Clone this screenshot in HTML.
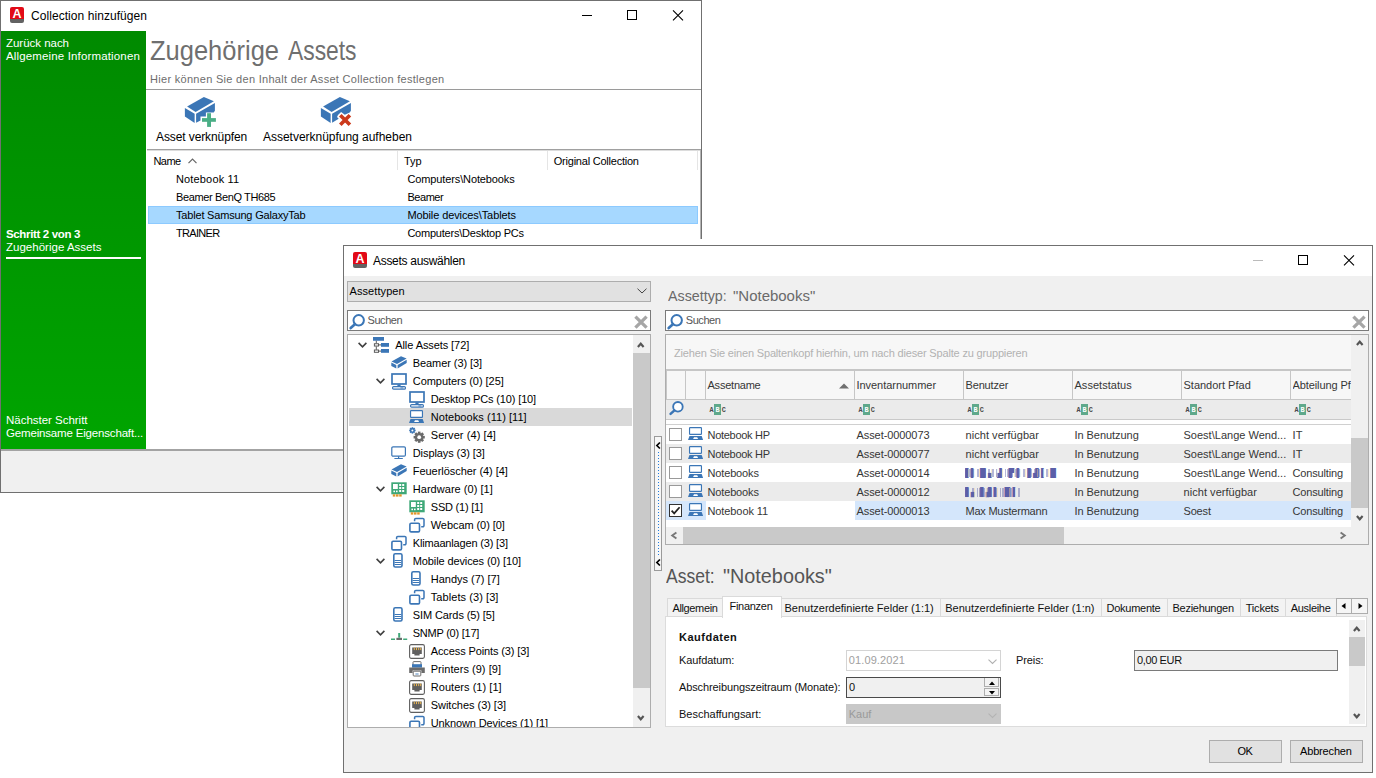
<!DOCTYPE html>
<html lang="de"><head><meta charset="utf-8"><title>Collection hinzufügen</title><style>
html,body{margin:0;padding:0;background:#fff;}
body{width:1376px;height:778px;position:relative;overflow:hidden;font-family:"Liberation Sans",sans-serif;}
.a{position:absolute;white-space:pre;}
svg.a{overflow:visible;}
.t11{font-size:11px;letter-spacing:-0.08px;}
.t12{font-size:12px;}
.t11s{font-size:11.5px;}
.b{font-weight:bold;}
.hd{font-weight:normal;}
.mosaic{font-family:"DejaVu Sans","Liberation Sans",sans-serif;font-size:9px;color:#5a5fa8;overflow:hidden;letter-spacing:-1.2px;}
.mos{background-size:23px 100%;background-image:linear-gradient(90deg,#5a5fa8 0 2px,transparent 2px 3px,#f3cf8f 3px 4px,#5a5fa8 4px 6px,transparent 6px 8px,#5a5fa8 8px 9px,#cfeaf5 9px 10px,transparent 10px 12px,#5a5fa8 12px 14px,#f3cf8f 14px 15px,transparent 15px 17px,#5a5fa8 17px 18px,transparent 18px 19px,#5a5fa8 19px 21px,transparent 21px 23px);opacity:.45;}
</style></head>
<body>
<div class="a" style="left:0px;top:0px;width:702px;height:493px;background:#fff;border:1px solid #707070;box-sizing:border-box;"></div>
<svg class="a" style="left:10px;top:7px;" width="14" height="16" viewBox="0 0 14 16"><path d="M2 0h10a2 2 0 0 1 2 2v10H0V2a2 2 0 0 1 2-2z" fill="#e20a17"/><path d="M0 12h14v2a2 2 0 0 1-2 2H2a2 2 0 0 1-2-2z" fill="#626262"/><text x="7" y="11.2" text-anchor="middle" font-family="Liberation Sans, sans-serif" font-weight="bold" font-size="12.5" fill="#fff">A</text></svg>
<span class="a t12" style="left:31px;top:7.5px;line-height:16px;letter-spacing:0.06px;color:#000;">Collection hinzufügen</span>
<svg class="a" style="left:582px;top:10px;" width="102" height="11" viewBox="0 0 102 11"><path d="M0 5.5H10" stroke="#000" stroke-width="1"/><rect x="45.5" y="0.5" width="9" height="9" fill="none" stroke="#000" stroke-width="1"/><path d="M91 0.3 L101 10.3 M101 0.3 L91 10.3" stroke="#000" stroke-width="1.1"/></svg>
<div class="a" style="left:1px;top:31px;width:145px;height:419px;background:linear-gradient(#008a00,#00a500);"></div>
<span class="a t11s" style="left:6px;top:36px;line-height:14px;letter-spacing:-0.026px;color:#fff;">Zurück nach</span>
<span class="a t11s" style="left:6px;top:49px;line-height:14px;letter-spacing:0.149px;color:#fff;">Allgemeine Informationen</span>
<span class="a t11s b" style="left:6px;top:227px;line-height:14px;letter-spacing:-0.350px;color:#fff;">Schritt 2 von 3</span>
<span class="a t11s" style="left:6px;top:240px;line-height:14px;letter-spacing:0.014px;color:#fff;">Zugehörige Assets</span>
<div class="a" style="left:6px;top:257px;width:135px;height:2px;background:#fff;"></div>
<span class="a t11s" style="left:6px;top:413px;line-height:14px;letter-spacing:-0.020px;color:#fff;">Nächster Schritt</span>
<span class="a t11s" style="left:6px;top:426px;line-height:14px;letter-spacing:-0.171px;color:#fff;">Gemeinsame Eigenschaft...</span>
<span class="a hd" style="left:150.2px;top:33.44px;font-size:27.6px;line-height:36px;transform:scaleX(0.9240);transform-origin:0 0;color:#6f6f6f">Zugehörige</span>
<span class="a hd" style="left:288.2px;top:33.44px;font-size:27.6px;line-height:36px;transform:scaleX(0.8272);transform-origin:0 0;color:#6f6f6f">Assets</span>
<span class="a t11s" style="left:150px;top:72px;line-height:14px;letter-spacing:0.296px;color:#6d6d6d;font-size:11px;">Hier können Sie den Inhalt der Asset Collection festlegen</span>
<div class="a" style="left:146px;top:89px;width:555px;height:1px;background:#9a9a9a;"></div>
<svg class="a" style="left:185px;top:97px;" width="32" height="31" viewBox="0 0 32 31"><path d="M18.9 -0.1 L28.9 4.3 L10.6 15 L2.1 9.4z" fill="#3b76b6"/><path d="M-0.1 10.9 L9.65 16.7 L9.65 26 L-0.1 19.4z" fill="#3b76b6"/><path d="M11.1 16.7 L29.9 6 L29.9 13.8 L28.7 15.5 L20.9 15.5 L20.9 19.4 L15.5 19.4 L15.5 23.5 L11.1 25.8z" fill="#3b76b6"/><rect x="22.1" y="16.2" width="3.9" height="13.7" fill="#4aae86"/><rect x="17" y="21.1" width="13.9" height="3.7" fill="#4aae86"/></svg>
<svg class="a" style="left:321px;top:97px;" width="32" height="31" viewBox="0 0 32 31"><path d="M18.9 -0.1 L28.9 4.3 L10.6 15 L2.1 9.4z" fill="#3b76b6"/><path d="M-0.1 10.9 L9.65 16.7 L9.65 26 L-0.1 19.4z" fill="#3b76b6"/><path d="M11.1 16.7 L29.9 6 L29.9 13.8 L28.7 15.5 L23.8 17.7 L20.1 15 L17 17.9 L16 19.9 L17.7 21.8 L11.1 25.8z" fill="#3b76b6"/><path d="M19.3 18.3 L28.9 27.7 M28.9 18.3 L19.3 27.7" stroke="#cc3a1c" stroke-width="3.7" fill="none"/></svg>
<span class="a t12" style="left:156px;top:129px;line-height:16px;letter-spacing:-0.1px;color:#000;">Asset verknüpfen</span>
<span class="a t12" style="left:263px;top:129px;line-height:16px;letter-spacing:-0.02px;color:#000;">Assetverknüpfung aufheben</span>
<div class="a" style="left:147px;top:149px;width:554px;height:1px;background:#a0a0a0;"></div>
<div class="a" style="left:147px;top:150px;width:554px;height:1px;background:#dcdcdc;"></div>
<div class="a" style="left:700px;top:150px;width:1px;height:300px;background:#b4b4b4;"></div>
<div class="a" style="left:397px;top:151px;width:1px;height:19px;background:#e5e5e5;"></div>
<div class="a" style="left:547px;top:151px;width:1px;height:19px;background:#e5e5e5;"></div>
<div class="a" style="left:697px;top:151px;width:1px;height:19px;background:#e5e5e5;"></div>
<span class="a t11" style="left:153.5px;top:153.5px;line-height:14px;letter-spacing:-0.586px;color:#000;">Name</span>
<svg class="a" style="left:188.3px;top:157.6px;" width="9" height="6" viewBox="0 0 9 6"><path d="M0.5 5.2 L4.5 1 L8.5 5.2" fill="none" stroke="#666" stroke-width="1.15"/></svg>
<span class="a t11" style="left:404px;top:153.5px;line-height:14px;letter-spacing:-0.078px;color:#000;">Typ</span>
<span class="a t11" style="left:553.75px;top:153.5px;line-height:14px;letter-spacing:-0.225px;color:#000;">Original Collection</span>
<span class="a t11" style="left:176px;top:171.5px;line-height:14px;letter-spacing:0.152px;color:#000;">Notebook 11</span>
<span class="a t11" style="left:407.4px;top:171.5px;line-height:14px;letter-spacing:-0.116px;color:#000;">Computers\Notebooks</span>
<span class="a t11" style="left:176px;top:189.5px;line-height:14px;letter-spacing:-0.372px;color:#000;">Beamer BenQ TH685</span>
<span class="a t11" style="left:407.4px;top:189.5px;line-height:14px;letter-spacing:-0.439px;color:#000;">Beamer</span>
<div class="a" style="left:148px;top:206px;width:550px;height:18px;background:#a6d8ff;border:1px solid #8ccaff;box-sizing:border-box;"></div>
<span class="a t11" style="left:176px;top:207.5px;line-height:14px;letter-spacing:-0.184px;color:#000;">Tablet Samsung GalaxyTab</span>
<span class="a t11" style="left:407.4px;top:207.5px;line-height:14px;letter-spacing:-0.099px;color:#000;">Mobile devices\Tablets</span>
<span class="a t11" style="left:176px;top:225.5px;line-height:14px;letter-spacing:-0.683px;color:#000;">TRAINER</span>
<span class="a t11" style="left:407.4px;top:225.5px;line-height:14px;letter-spacing:-0.217px;color:#000;">Computers\Desktop PCs</span>
<div class="a" style="left:1px;top:451px;width:700px;height:41px;background:#f0f0f0;"></div>
<div class="a" style="left:1px;top:449px;width:700px;height:2px;background:#a3a3a3;"></div>
<div class="a" style="left:343px;top:239px;width:1033px;height:6px;background:#fff;"></div>
<div class="a" style="left:343px;top:245px;width:1030px;height:528px;background:#f0f0f0;border:1px solid #707070;box-sizing:border-box;"></div>
<div class="a" style="left:344px;top:246px;width:1028px;height:30px;background:#fff;"></div>
<svg class="a" style="left:353px;top:252px;" width="14" height="16" viewBox="0 0 14 16"><path d="M2 0h10a2 2 0 0 1 2 2v10H0V2a2 2 0 0 1 2-2z" fill="#e20a17"/><path d="M0 12h14v2a2 2 0 0 1-2 2H2a2 2 0 0 1-2-2z" fill="#626262"/><text x="7" y="11.2" text-anchor="middle" font-family="Liberation Sans, sans-serif" font-weight="bold" font-size="12.5" fill="#fff">A</text></svg>
<span class="a t12" style="left:373px;top:252.5px;line-height:16px;letter-spacing:-0.296px;color:#000;">Assets auswählen</span>
<svg class="a" style="left:1253px;top:255px;" width="104" height="11" viewBox="0 0 104 11"><path d="M0 5.5H10" stroke="#bbb" stroke-width="1"/><rect x="45.5" y="0.5" width="9" height="9" fill="none" stroke="#000" stroke-width="1"/><path d="M91 0.3 L101 10.3 M101 0.3 L91 10.3" stroke="#000" stroke-width="1.1"/></svg>
<div class="a" style="left:347px;top:281px;width:304px;height:21px;background:#e1e1e1;border:1px solid #adadad;box-sizing:border-box;"></div>
<span class="a t11" style="left:349.5px;top:283.5px;line-height:14px;letter-spacing:0.083px;color:#000;">Assettypen</span>
<svg class="a" style="left:637px;top:288px;" width="10" height="6" viewBox="0 0 10 6"><path d="M0.5 0.7 L5 5 L9.5 0.7" fill="none" stroke="#444" stroke-width="1"/></svg>
<div class="a" style="left:347px;top:310px;width:304px;height:21px;background:#fff;border:1px solid #7a7a7a;box-sizing:border-box;"></div>
<svg class="a" style="left:349px;top:314px;" width="16.0" height="16.0" viewBox="0 0 16 16"><circle cx="9.7" cy="6.3" r="5.2" fill="#fff" stroke="#3b76b6" stroke-width="2"/><path d="M5.9 10.2 L1.7 14.0" stroke="#3b76b6" stroke-width="2.7" stroke-linecap="round"/></svg>
<span class="a t11" style="left:367.5px;top:313px;line-height:14px;letter-spacing:-0.427px;color:#555;">Suchen</span>
<svg class="a" style="left:634.3px;top:315px;" width="14" height="14" viewBox="0 0 14 14"><path d="M1.4 1.6 L12.6 12.6 M12.6 1.6 L1.4 12.6" stroke="#a6a6a6" stroke-width="3.3" fill="none"/></svg>
<div class="a" style="left:347px;top:334px;width:304px;height:394px;background:#fff;border:1px solid #adadad;box-sizing:border-box;"></div>
<div class="a" style="left:348px;top:335px;width:302px;height:392px;overflow:hidden">
<svg class="a" style="left:10px;top:7px;" width="9" height="6" viewBox="0 0 9 6"><path d="M0.6 0.9 L4.5 4.8 L8.4 0.9" fill="none" stroke="#404040" stroke-width="1.6"/></svg>
<svg class="a" style="left:25px;top:2px;" width="16" height="16" viewBox="0 0 16 16"><rect x="0" y="0" width="11" height="3.75" fill="#3b76b6"/><rect x="8" y="6" width="8" height="3.8" fill="#3b76b6"/><rect x="8" y="12" width="8" height="3.8" fill="#3b76b6"/><path d="M3.3 3.7V6.4M3.3 9.4V12.8M6 7.9H8M6 14.1H8" stroke="#5a5a5a" stroke-width="1" fill="none"/><rect x="1.4" y="6.75" width="4.1" height="2.3" fill="#fff" stroke="#5a5a5a" stroke-width="1"/><rect x="1.4" y="13" width="4.1" height="2.3" fill="#fff" stroke="#5a5a5a" stroke-width="1"/></svg>
<span class="a t11" style="left:47.25px;top:2.5px;line-height:14px;letter-spacing:-0.082px;color:#000;">Alle Assets [72]</span>
<svg class="a" style="left:43px;top:21px;" width="16" height="13" viewBox="0 0 16 13"><path d="M0.5 5.6 L10 0.3 L15.6 2.5 L6 8z" fill="#3b76b6"/><path d="M0.3 6.6 L5.3 8.9 L5.3 12.5 L0.3 10.1z" fill="#3b76b6"/><path d="M6.6 9 L15.7 3.8 L15.7 7.1 L6.6 12.5z" fill="#3b76b6"/></svg>
<span class="a t11" style="left:64.75px;top:20.5px;line-height:14px;letter-spacing:-0.076px;color:#000;">Beamer (3) [3]</span>
<svg class="a" style="left:28px;top:43px;" width="9" height="6" viewBox="0 0 9 6"><path d="M0.6 0.9 L4.5 4.8 L8.4 0.9" fill="none" stroke="#404040" stroke-width="1.6"/></svg>
<svg class="a" style="left:43px;top:38px;" width="16" height="17" viewBox="0 0 16 17"><rect x="1" y="1" width="14" height="10" fill="#fff" stroke="#3b76b6" stroke-width="1.7"/><rect x="6.4" y="11.4" width="3.2" height="1.8" fill="#3b76b6"/><rect x="1.6" y="13.6" width="12.8" height="2.6" rx="1" fill="#fff" stroke="#3b76b6" stroke-width="1.2"/><rect x="9.4" y="14.5" width="3" height="0.9" fill="#3b76b6"/></svg>
<span class="a t11" style="left:64.75px;top:38.5px;line-height:14px;letter-spacing:-0.039px;color:#000;">Computers (0) [25]</span>
<svg class="a" style="left:61px;top:56px;" width="16" height="17" viewBox="0 0 16 17"><rect x="1" y="1" width="14" height="10" fill="#fff" stroke="#3b76b6" stroke-width="1.7"/><rect x="6.4" y="11.4" width="3.2" height="1.8" fill="#3b76b6"/><rect x="1.6" y="13.6" width="12.8" height="2.6" rx="1" fill="#fff" stroke="#3b76b6" stroke-width="1.2"/><rect x="9.4" y="14.5" width="3" height="0.9" fill="#3b76b6"/></svg>
<span class="a t11" style="left:82.75px;top:56.5px;line-height:14px;letter-spacing:-0.141px;color:#000;">Desktop PCs (10) [10]</span>
<div class="a" style="left:1px;top:73px;width:283px;height:18px;background:#d9d9d9;"></div>
<svg class="a" style="left:61px;top:75px;" width="16" height="14" viewBox="0 0 16 14"><rect x="1.55" y="0.65" width="11.9" height="6.7" rx="0.6" fill="#fff" stroke="#3b76b6" stroke-width="1.15"/><path d="M1.5 9 H13.7 L15.1 13 H0z" fill="#3b76b6"/><path d="M5.1 11.9 L6 10.3 H9.2 L10.1 11.9z" fill="#fff"/></svg>
<span class="a t11" style="left:82.75px;top:74.5px;line-height:14px;letter-spacing:0.053px;color:#000;">Notebooks (11) [11]</span>
<svg class="a" style="left:61px;top:92px;" width="16" height="16" viewBox="0 0 16 16"><g transform="translate(10.2,10.2)" fill="#6b6b6b"><rect x="-1.3" y="-5.6" width="2.6" height="11.2" transform="rotate(0)"/><rect x="-1.3" y="-5.6" width="2.6" height="11.2" transform="rotate(45)"/><rect x="-1.3" y="-5.6" width="2.6" height="11.2" transform="rotate(90)"/><rect x="-1.3" y="-5.6" width="2.6" height="11.2" transform="rotate(135)"/><circle r="4.3"/><circle r="1.9" fill="#fff"/></g><g transform="translate(3.4,3.4)" fill="#3b76b6"><rect x="-0.8" y="-3.2" width="1.6" height="6.4" transform="rotate(0)"/><rect x="-0.8" y="-3.2" width="1.6" height="6.4" transform="rotate(45)"/><rect x="-0.8" y="-3.2" width="1.6" height="6.4" transform="rotate(90)"/><rect x="-0.8" y="-3.2" width="1.6" height="6.4" transform="rotate(135)"/><circle r="2.3"/><circle r="1" fill="#fff"/></g></svg>
<span class="a t11" style="left:82.75px;top:92.5px;line-height:14px;letter-spacing:0.076px;color:#000;">Server (4) [4]</span>
<svg class="a" style="left:43px;top:111px;" width="16" height="14" viewBox="0 0 16 14"><rect x="0.8" y="0.8" width="13.6" height="9.4" rx="1.2" fill="#fff" stroke="#3b76b6" stroke-width="1.2"/><path d="M7.6 10.2V12.2M3.4 12.5H11.8" stroke="#3b76b6" stroke-width="1.2" fill="none"/></svg>
<span class="a t11" style="left:64.75px;top:110.5px;line-height:14px;letter-spacing:-0.085px;color:#000;">Displays (3) [3]</span>
<svg class="a" style="left:43px;top:129px;" width="16" height="13" viewBox="0 0 16 13"><path d="M0.5 5.6 L10 0.3 L15.6 2.5 L6 8z" fill="#3b76b6"/><path d="M0.3 6.6 L5.3 8.9 L5.3 12.5 L0.3 10.1z" fill="#3b76b6"/><path d="M6.6 9 L15.7 3.8 L15.7 7.1 L6.6 12.5z" fill="#3b76b6"/></svg>
<span class="a t11" style="left:64.75px;top:128.5px;line-height:14px;letter-spacing:-0.044px;color:#000;">Feuerlöscher (4) [4]</span>
<svg class="a" style="left:28px;top:151px;" width="9" height="6" viewBox="0 0 9 6"><path d="M0.6 0.9 L4.5 4.8 L8.4 0.9" fill="none" stroke="#404040" stroke-width="1.6"/></svg>
<svg class="a" style="left:43px;top:147px;" width="16" height="15" viewBox="0 0 16 15"><rect x="0.3" y="0.3" width="15.4" height="12" fill="#3fa878"/><rect x="2" y="2" width="4.8" height="5" fill="#fff"/><rect x="2.4" y="8.6" width="1.6" height="1.6" fill="#fff"/><rect x="5" y="8.6" width="1.6" height="1.6" fill="#fff"/><rect x="8.2" y="2" width="2" height="2" fill="#fff"/><rect x="8.2" y="5" width="2" height="2" fill="#fff"/><rect x="8.2" y="8" width="2" height="2" fill="#fff"/><rect x="11.2" y="2" width="2" height="2" fill="#fff"/><rect x="11.2" y="5" width="2" height="2" fill="#fff"/><rect x="11.2" y="8" width="2" height="2" fill="#fff"/><rect x="1.8" y="12.3" width="2.5" height="2.3" fill="#e2952a"/><rect x="5" y="12.3" width="2.5" height="2.3" fill="#e2952a"/><rect x="8.2" y="12.3" width="2.5" height="2.3" fill="#e2952a"/></svg>
<span class="a t11" style="left:64.75px;top:146.5px;line-height:14px;letter-spacing:0.038px;color:#000;">Hardware (0) [1]</span>
<svg class="a" style="left:61px;top:165px;" width="16" height="15" viewBox="0 0 16 15"><rect x="0.3" y="0.3" width="15.4" height="12" fill="#3fa878"/><rect x="2" y="2" width="4.8" height="5" fill="#fff"/><rect x="2.4" y="8.6" width="1.6" height="1.6" fill="#fff"/><rect x="5" y="8.6" width="1.6" height="1.6" fill="#fff"/><rect x="8.2" y="2" width="2" height="2" fill="#fff"/><rect x="8.2" y="5" width="2" height="2" fill="#fff"/><rect x="8.2" y="8" width="2" height="2" fill="#fff"/><rect x="11.2" y="2" width="2" height="2" fill="#fff"/><rect x="11.2" y="5" width="2" height="2" fill="#fff"/><rect x="11.2" y="8" width="2" height="2" fill="#fff"/><rect x="1.8" y="12.3" width="2.5" height="2.3" fill="#e2952a"/><rect x="5" y="12.3" width="2.5" height="2.3" fill="#e2952a"/><rect x="8.2" y="12.3" width="2.5" height="2.3" fill="#e2952a"/></svg>
<span class="a t11" style="left:82.75px;top:164.5px;line-height:14px;letter-spacing:-0.210px;color:#000;">SSD (1) [1]</span>
<svg class="a" style="left:61px;top:182px;" width="16" height="16" viewBox="0 0 16 16"><path d="M5.6 4.2V2.6a1.2 1.2 0 0 1 1.2-1.2h7a1.2 1.2 0 0 1 1.2 1.2v6a1.2 1.2 0 0 1-1.2 1.2h-1.6" fill="none" stroke="#3b76b6" stroke-width="1.5"/><rect x="0.9" y="6.3" width="9.6" height="8.6" rx="1.2" fill="#fff" stroke="#3b76b6" stroke-width="1.6"/></svg>
<span class="a t11" style="left:82.75px;top:182.5px;line-height:14px;letter-spacing:-0.071px;color:#000;">Webcam (0) [0]</span>
<svg class="a" style="left:43px;top:200px;" width="16" height="16" viewBox="0 0 16 16"><path d="M5.6 4.2V2.6a1.2 1.2 0 0 1 1.2-1.2h7a1.2 1.2 0 0 1 1.2 1.2v6a1.2 1.2 0 0 1-1.2 1.2h-1.6" fill="none" stroke="#3b76b6" stroke-width="1.5"/><rect x="0.9" y="6.3" width="9.6" height="8.6" rx="1.2" fill="#fff" stroke="#3b76b6" stroke-width="1.6"/></svg>
<span class="a t11" style="left:64.75px;top:200.5px;line-height:14px;letter-spacing:-0.168px;color:#000;">Klimaanlagen (3) [3]</span>
<svg class="a" style="left:28px;top:223px;" width="9" height="6" viewBox="0 0 9 6"><path d="M0.6 0.9 L4.5 4.8 L8.4 0.9" fill="none" stroke="#404040" stroke-width="1.6"/></svg>
<svg class="a" style="left:45px;top:218px;" width="10" height="15" viewBox="0 0 10 15"><rect x="0.8" y="0.8" width="8.2" height="13.2" rx="1.5" fill="#fff" stroke="#3b76b6" stroke-width="1.6"/><path d="M1.6 7.5H8.2M1.6 9.5H8.2M1.6 11.5H8.2" stroke="#3b76b6" stroke-width="1"/></svg>
<span class="a t11" style="left:64.75px;top:218.5px;line-height:14px;letter-spacing:-0.112px;color:#000;">Mobile devices (0) [10]</span>
<svg class="a" style="left:63px;top:236px;" width="10" height="15" viewBox="0 0 10 15"><rect x="0.8" y="0.8" width="8.2" height="13.2" rx="1.5" fill="#fff" stroke="#3b76b6" stroke-width="1.6"/><path d="M1.6 7.5H8.2M1.6 9.5H8.2M1.6 11.5H8.2" stroke="#3b76b6" stroke-width="1"/></svg>
<span class="a t11" style="left:82.75px;top:236.5px;line-height:14px;letter-spacing:-0.007px;color:#000;">Handys (7) [7]</span>
<svg class="a" style="left:61px;top:254px;" width="16" height="16" viewBox="0 0 16 16"><path d="M5.6 4.2V2.6a1.2 1.2 0 0 1 1.2-1.2h7a1.2 1.2 0 0 1 1.2 1.2v6a1.2 1.2 0 0 1-1.2 1.2h-1.6" fill="none" stroke="#3b76b6" stroke-width="1.5"/><rect x="0.9" y="6.3" width="9.6" height="8.6" rx="1.2" fill="#fff" stroke="#3b76b6" stroke-width="1.6"/></svg>
<span class="a t11" style="left:82.75px;top:254.5px;line-height:14px;letter-spacing:0.074px;color:#000;">Tablets (3) [3]</span>
<svg class="a" style="left:45px;top:272px;" width="10" height="15" viewBox="0 0 10 15"><rect x="0.8" y="0.8" width="8.2" height="13.2" rx="1.5" fill="#fff" stroke="#3b76b6" stroke-width="1.6"/><path d="M1.6 7.5H8.2M1.6 9.5H8.2M1.6 11.5H8.2" stroke="#3b76b6" stroke-width="1"/></svg>
<span class="a t11" style="left:64.75px;top:272.5px;line-height:14px;letter-spacing:-0.103px;color:#000;">SIM Cards (5) [5]</span>
<svg class="a" style="left:28px;top:295px;" width="9" height="6" viewBox="0 0 9 6"><path d="M0.6 0.9 L4.5 4.8 L8.4 0.9" fill="none" stroke="#404040" stroke-width="1.6"/></svg>
<svg class="a" style="left:43px;top:297px;" width="17" height="9" viewBox="0 0 17 9"><rect x="7.2" y="1" width="2" height="4.7" fill="#3fa878"/><rect x="5.4" y="5.8" width="5.6" height="2.2" fill="#6b6b6b"/><rect x="0" y="6.5" width="4" height="1.5" fill="#3fa878"/><rect x="12.2" y="6.5" width="4" height="1.5" fill="#3fa878"/></svg>
<span class="a t11" style="left:64.75px;top:290.5px;line-height:14px;letter-spacing:-0.238px;color:#000;">SNMP (0) [17]</span>
<svg class="a" style="left:61px;top:309px;" width="16" height="15" viewBox="0 0 16 15"><rect x="0.6" y="0.6" width="14.8" height="13.8" rx="1.6" fill="#fff" stroke="#5f5f5f" stroke-width="1.1"/><path d="M3.2 3.6H12.8V10H10.6V11.4H5.4V10H3.2z" fill="#5f5f5f"/><path d="M5.3 3.6v2.5M7.5 3.6v2.5M9.7 3.6v2.5M11.7 3.6v2.5" stroke="#f0b850" stroke-width="0.95"/></svg>
<span class="a t11" style="left:82.75px;top:308.5px;line-height:14px;letter-spacing:-0.113px;color:#000;">Access Points (3) [3]</span>
<svg class="a" style="left:61px;top:326px;" width="16" height="16" viewBox="0 0 16 16"><rect x="4" y="0.6" width="8" height="4" rx=".8" fill="#fff" stroke="#6b6b6b" stroke-width="1"/><rect x="3" y="3.2" width="10" height="3.4" fill="#3b76b6"/><path d="M0.2 6.6H15.8V12H12.4V9.6H3.6V12H0.2z" fill="#6b6b6b"/><rect x="4.2" y="10.2" width="7.6" height="4.8" rx=".8" fill="#fff" stroke="#6b6b6b" stroke-width="1"/><path d="M6.4 13H9.6" stroke="#3b76b6" stroke-width="0.9"/></svg>
<span class="a t11" style="left:82.75px;top:326.5px;line-height:14px;letter-spacing:0.035px;color:#000;">Printers (9) [9]</span>
<svg class="a" style="left:61px;top:345px;" width="16" height="15" viewBox="0 0 16 15"><rect x="0.6" y="0.6" width="14.8" height="13.8" rx="1.6" fill="#fff" stroke="#5f5f5f" stroke-width="1.1"/><path d="M3.2 3.6H12.8V10H10.6V11.4H5.4V10H3.2z" fill="#5f5f5f"/><path d="M5.3 3.6v2.5M7.5 3.6v2.5M9.7 3.6v2.5M11.7 3.6v2.5" stroke="#f0b850" stroke-width="0.95"/></svg>
<span class="a t11" style="left:82.75px;top:344.5px;line-height:14px;letter-spacing:0.039px;color:#000;">Routers (1) [1]</span>
<svg class="a" style="left:61px;top:363px;" width="16" height="15" viewBox="0 0 16 15"><rect x="0.6" y="0.6" width="14.8" height="13.8" rx="1.6" fill="#fff" stroke="#5f5f5f" stroke-width="1.1"/><path d="M3.2 3.6H12.8V10H10.6V11.4H5.4V10H3.2z" fill="#5f5f5f"/><path d="M5.3 3.6v2.5M7.5 3.6v2.5M9.7 3.6v2.5M11.7 3.6v2.5" stroke="#f0b850" stroke-width="0.95"/></svg>
<span class="a t11" style="left:82.75px;top:362.5px;line-height:14px;letter-spacing:-0.035px;color:#000;">Switches (3) [3]</span>
<svg class="a" style="left:61px;top:380px;" width="16" height="16" viewBox="0 0 16 16"><path d="M5.6 4.2V2.6a1.2 1.2 0 0 1 1.2-1.2h7a1.2 1.2 0 0 1 1.2 1.2v6a1.2 1.2 0 0 1-1.2 1.2h-1.6" fill="none" stroke="#3b76b6" stroke-width="1.5"/><rect x="0.9" y="6.3" width="9.6" height="8.6" rx="1.2" fill="#fff" stroke="#3b76b6" stroke-width="1.6"/></svg>
<span class="a t11" style="left:82.75px;top:380.5px;line-height:14px;letter-spacing:-0.112px;color:#000;">Unknown Devices (1) [1]</span>
</div>
<div class="a" style="left:633px;top:335px;width:17px;height:392px;background:#f0f0f0;"></div>
<div class="a" style="left:633px;top:353px;width:17px;height:335px;background:#c9c9c9;"></div>
<svg class="a" style="left:636.95px;top:342.3px;" width="7.5" height="6" viewBox="0 0 7.5 6"><path d="M0.9 5.0 L3.75 1.7 L6.6 5.0" fill="none" stroke="#555" stroke-width="2.1"/></svg>
<svg class="a" style="left:636.95px;top:715.2px;" width="7.5" height="6" viewBox="0 0 7.5 6"><path d="M0.9 1.0 L3.75 4.3 L6.6 1.0" fill="none" stroke="#555" stroke-width="2.1"/></svg>
<div class="a" style="left:654px;top:436px;width:8px;height:135px;background:#f6f6f6;border:1px solid #9a9a9a;box-sizing:border-box;"></div>
<svg class="a" style="left:658px;top:452px;" width="1" height="104" viewBox="0 0 1 104"><path d="M0.5 0V104" stroke="#1e7be0" stroke-width="1" stroke-dasharray="1 2"/></svg>
<svg class="a" style="left:655.5px;top:442px;" width="5" height="7" viewBox="0 0 5 7"><path d="M3.9 0.5 L0.9 3.5 L3.9 6.5" fill="none" stroke="#000" stroke-width="1.7"/></svg>
<svg class="a" style="left:655.5px;top:559px;" width="5" height="7" viewBox="0 0 5 7"><path d="M3.9 0.5 L0.9 3.5 L3.9 6.5" fill="none" stroke="#000" stroke-width="1.7"/></svg>
<span class="a hd" style="left:668.2px;top:285.73px;font-size:15.2px;line-height:20px;transform:scaleX(0.9397);transform-origin:0 0;color:#6a6a6a">Assettyp:</span>
<span class="a hd" style="left:732.5px;top:285.73px;font-size:15.2px;line-height:20px;transform:scaleX(0.9863);transform-origin:0 0;color:#6a6a6a">"Notebooks"</span>
<div class="a" style="left:665px;top:310px;width:704px;height:21px;background:#fff;border:1px solid #7a7a7a;box-sizing:border-box;"></div>
<svg class="a" style="left:667px;top:314px;" width="16.0" height="16.0" viewBox="0 0 16 16"><circle cx="9.7" cy="6.3" r="5.2" fill="#fff" stroke="#3b76b6" stroke-width="2"/><path d="M5.9 10.2 L1.7 14.0" stroke="#3b76b6" stroke-width="2.7" stroke-linecap="round"/></svg>
<span class="a t11" style="left:685.75px;top:313px;line-height:14px;letter-spacing:-0.427px;color:#555;">Suchen</span>
<svg class="a" style="left:1352.2px;top:315px;" width="14" height="14" viewBox="0 0 14 14"><path d="M1.4 1.6 L12.6 12.6 M12.6 1.6 L1.4 12.6" stroke="#a6a6a6" stroke-width="3.3" fill="none"/></svg>
<div class="a" style="left:665px;top:334px;width:704px;height:211px;background:#fff;border:1px solid #adadad;box-sizing:border-box;"></div>
<div class="a" style="left:666px;top:335px;width:685px;height:35px;background:#f7f7f7;"></div>
<span class="a t11" style="left:674px;top:345.5px;line-height:14px;letter-spacing:-0.167px;color:#b2b2b2;">Ziehen Sie einen Spaltenkopf hierhin, um nach dieser Spalte zu gruppieren</span>
<div class="a" style="left:666px;top:370px;width:685px;height:30px;background:#f7f7f7;"></div>
<div class="a" style="left:666px;top:369px;width:685px;height:2px;background:#c6c6c6;"></div>
<div class="a" style="left:666px;top:399px;width:685px;height:1px;background:#c6c6c6;"></div>
<div class="a" style="left:685px;top:371px;width:1px;height:28px;background:#c6c6c6;"></div>
<div class="a" style="left:705px;top:371px;width:1px;height:28px;background:#c6c6c6;"></div>
<div class="a" style="left:854px;top:371px;width:1px;height:28px;background:#c6c6c6;"></div>
<div class="a" style="left:963px;top:371px;width:1px;height:28px;background:#c6c6c6;"></div>
<div class="a" style="left:1072px;top:371px;width:1px;height:28px;background:#c6c6c6;"></div>
<div class="a" style="left:1181px;top:371px;width:1px;height:28px;background:#c6c6c6;"></div>
<div class="a" style="left:1290px;top:371px;width:1px;height:28px;background:#c6c6c6;"></div>
<div class="a" style="left:666px;top:371px;width:1px;height:28px;background:#c6c6c6;"></div>
<span class="a t11" style="left:707.5px;top:377.5px;line-height:14px;letter-spacing:-0.226px;color:#363636;">Assetname</span>
<span class="a t11" style="left:856.5px;top:377.5px;line-height:14px;letter-spacing:-0.042px;color:#363636;">Inventarnummer</span>
<span class="a t11" style="left:965.5px;top:377.5px;line-height:14px;letter-spacing:-0.154px;color:#363636;">Benutzer</span>
<span class="a t11" style="left:1074.5px;top:377.5px;line-height:14px;letter-spacing:0.036px;color:#363636;">Assetstatus</span>
<span class="a t11" style="left:1183.5px;top:377.5px;line-height:14px;letter-spacing:-0.002px;color:#363636;">Standort Pfad</span>
<span class="a t11" style="left:1292.5px;top:377.5px;line-height:14px;letter-spacing:-0.102px;color:#363636;width:58.5px;overflow:hidden;">Abteilung Pf</span>
<svg class="a" style="left:839px;top:383px;" width="10" height="6" viewBox="0 0 10 6"><path d="M0 5.5 L5 0.5 L10 5.5z" fill="#707070"/></svg>
<div class="a" style="left:666px;top:400px;width:685px;height:19px;background:#ebebeb;"></div>
<div class="a" style="left:666px;top:419px;width:685px;height:1px;background:#c9c9c9;"></div>
<div class="a" style="left:666px;top:420px;width:685px;height:4px;background:#fff;"></div>
<div class="a" style="left:666px;top:424px;width:685px;height:1px;background:#d0d0d0;"></div>
<svg class="a" style="left:669.2px;top:401.1px;" width="14.72" height="14.72" viewBox="0 0 16 16"><circle cx="9.7" cy="6.3" r="5.2" fill="#fff" stroke="#3b76b6" stroke-width="2"/><path d="M5.9 10.2 L1.7 14.0" stroke="#3b76b6" stroke-width="2.7" stroke-linecap="round"/></svg>
<svg class="a" style="left:709px;top:404px;" width="17" height="11" viewBox="0 0 17 11"><rect x="5" y="0" width="7" height="11" fill="#5fa98b"/><text x="0.4" y="8.3" font-family="Liberation Mono, monospace" font-weight="bold" font-size="6.8" fill="#4a4a4a">A</text><text x="6.5" y="8.3" font-family="Liberation Mono, monospace" font-weight="bold" font-size="6.8" fill="#fff">B</text><text x="12.8" y="8.3" font-family="Liberation Mono, monospace" font-weight="bold" font-size="6.8" fill="#4a4a4a">C</text></svg>
<svg class="a" style="left:858px;top:404px;" width="17" height="11" viewBox="0 0 17 11"><rect x="5" y="0" width="7" height="11" fill="#5fa98b"/><text x="0.4" y="8.3" font-family="Liberation Mono, monospace" font-weight="bold" font-size="6.8" fill="#4a4a4a">A</text><text x="6.5" y="8.3" font-family="Liberation Mono, monospace" font-weight="bold" font-size="6.8" fill="#fff">B</text><text x="12.8" y="8.3" font-family="Liberation Mono, monospace" font-weight="bold" font-size="6.8" fill="#4a4a4a">C</text></svg>
<svg class="a" style="left:967px;top:404px;" width="17" height="11" viewBox="0 0 17 11"><rect x="5" y="0" width="7" height="11" fill="#5fa98b"/><text x="0.4" y="8.3" font-family="Liberation Mono, monospace" font-weight="bold" font-size="6.8" fill="#4a4a4a">A</text><text x="6.5" y="8.3" font-family="Liberation Mono, monospace" font-weight="bold" font-size="6.8" fill="#fff">B</text><text x="12.8" y="8.3" font-family="Liberation Mono, monospace" font-weight="bold" font-size="6.8" fill="#4a4a4a">C</text></svg>
<svg class="a" style="left:1076px;top:404px;" width="17" height="11" viewBox="0 0 17 11"><rect x="5" y="0" width="7" height="11" fill="#5fa98b"/><text x="0.4" y="8.3" font-family="Liberation Mono, monospace" font-weight="bold" font-size="6.8" fill="#4a4a4a">A</text><text x="6.5" y="8.3" font-family="Liberation Mono, monospace" font-weight="bold" font-size="6.8" fill="#fff">B</text><text x="12.8" y="8.3" font-family="Liberation Mono, monospace" font-weight="bold" font-size="6.8" fill="#4a4a4a">C</text></svg>
<svg class="a" style="left:1185px;top:404px;" width="17" height="11" viewBox="0 0 17 11"><rect x="5" y="0" width="7" height="11" fill="#5fa98b"/><text x="0.4" y="8.3" font-family="Liberation Mono, monospace" font-weight="bold" font-size="6.8" fill="#4a4a4a">A</text><text x="6.5" y="8.3" font-family="Liberation Mono, monospace" font-weight="bold" font-size="6.8" fill="#fff">B</text><text x="12.8" y="8.3" font-family="Liberation Mono, monospace" font-weight="bold" font-size="6.8" fill="#4a4a4a">C</text></svg>
<svg class="a" style="left:1294px;top:404px;" width="17" height="11" viewBox="0 0 17 11"><rect x="5" y="0" width="7" height="11" fill="#5fa98b"/><text x="0.4" y="8.3" font-family="Liberation Mono, monospace" font-weight="bold" font-size="6.8" fill="#4a4a4a">A</text><text x="6.5" y="8.3" font-family="Liberation Mono, monospace" font-weight="bold" font-size="6.8" fill="#fff">B</text><text x="12.8" y="8.3" font-family="Liberation Mono, monospace" font-weight="bold" font-size="6.8" fill="#4a4a4a">C</text></svg>
<svg class="a" style="left:669px;top:428px;" width="13" height="13" viewBox="0 0 13 13"><rect x="0.5" y="0.5" width="12" height="12" fill="#fff" stroke="#999" stroke-width="1"/></svg>
<svg class="a" style="left:688px;top:427px;" width="16" height="14" viewBox="0 0 16 14"><rect x="1.55" y="0.65" width="11.9" height="6.7" rx="0.6" fill="#fff" stroke="#3b76b6" stroke-width="1.15"/><path d="M1.5 9 H13.7 L15.1 13 H0z" fill="#3b76b6"/><path d="M5.1 11.9 L6 10.3 H9.2 L10.1 11.9z" fill="#fff"/></svg>
<span class="a t11" style="left:707.5px;top:427.5px;line-height:14px;letter-spacing:-0.290px;color:#363636;">Notebook HP</span>
<span class="a t11" style="left:856.5px;top:427.5px;line-height:14px;letter-spacing:-0.077px;color:#363636;">Asset-0000073</span>
<span class="a t11" style="left:965.5px;top:427.5px;line-height:14px;letter-spacing:0.049px;color:#363636;">nicht verfügbar</span>
<span class="a t11" style="left:1074.5px;top:427.5px;line-height:14px;letter-spacing:-0.049px;color:#363636;">In Benutzung</span>
<span class="a t11" style="left:1183.5px;top:427.5px;line-height:14px;letter-spacing:0.011px;color:#363636;">Soest\Lange Wend...</span>
<span class="a t11" style="left:1292.5px;top:427.5px;line-height:14px;letter-spacing:0.109px;color:#363636;">IT</span>
<div class="a" style="left:666px;top:444px;width:685px;height:19px;background:#ebebeb;"></div>
<svg class="a" style="left:669px;top:447px;" width="13" height="13" viewBox="0 0 13 13"><rect x="0.5" y="0.5" width="12" height="12" fill="#fff" stroke="#999" stroke-width="1"/></svg>
<svg class="a" style="left:688px;top:446px;" width="16" height="14" viewBox="0 0 16 14"><rect x="1.55" y="0.65" width="11.9" height="6.7" rx="0.6" fill="#fff" stroke="#3b76b6" stroke-width="1.15"/><path d="M1.5 9 H13.7 L15.1 13 H0z" fill="#3b76b6"/><path d="M5.1 11.9 L6 10.3 H9.2 L10.1 11.9z" fill="#fff"/></svg>
<span class="a t11" style="left:707.5px;top:446.5px;line-height:14px;letter-spacing:-0.290px;color:#363636;">Notebook HP</span>
<span class="a t11" style="left:856.5px;top:446.5px;line-height:14px;letter-spacing:-0.077px;color:#363636;">Asset-0000077</span>
<span class="a t11" style="left:965.5px;top:446.5px;line-height:14px;letter-spacing:0.049px;color:#363636;">nicht verfügbar</span>
<span class="a t11" style="left:1074.5px;top:446.5px;line-height:14px;letter-spacing:-0.049px;color:#363636;">In Benutzung</span>
<span class="a t11" style="left:1183.5px;top:446.5px;line-height:14px;letter-spacing:0.011px;color:#363636;">Soest\Lange Wend...</span>
<span class="a t11" style="left:1292.5px;top:446.5px;line-height:14px;letter-spacing:0.109px;color:#363636;">IT</span>
<svg class="a" style="left:669px;top:466px;" width="13" height="13" viewBox="0 0 13 13"><rect x="0.5" y="0.5" width="12" height="12" fill="#fff" stroke="#999" stroke-width="1"/></svg>
<svg class="a" style="left:688px;top:465px;" width="16" height="14" viewBox="0 0 16 14"><rect x="1.55" y="0.65" width="11.9" height="6.7" rx="0.6" fill="#fff" stroke="#3b76b6" stroke-width="1.15"/><path d="M1.5 9 H13.7 L15.1 13 H0z" fill="#3b76b6"/><path d="M5.1 11.9 L6 10.3 H9.2 L10.1 11.9z" fill="#fff"/></svg>
<span class="a t11" style="left:707.5px;top:465.5px;line-height:14px;letter-spacing:-0.149px;color:#363636;">Notebooks</span>
<span class="a t11" style="left:856.5px;top:465.5px;line-height:14px;letter-spacing:-0.077px;color:#363636;">Asset-0000014</span>
<span class="a t11" style="left:1074.5px;top:465.5px;line-height:14px;letter-spacing:-0.049px;color:#363636;">In Benutzung</span>
<span class="a t11" style="left:1183.5px;top:465.5px;line-height:14px;letter-spacing:0.011px;color:#363636;">Soest\Lange Wend...</span>
<span class="a t11" style="left:1292.5px;top:465.5px;line-height:14px;letter-spacing:-0.148px;color:#363636;">Consulting</span>
<div class="a" style="left:666px;top:482px;width:685px;height:19px;background:#ebebeb;"></div>
<svg class="a" style="left:669px;top:485px;" width="13" height="13" viewBox="0 0 13 13"><rect x="0.5" y="0.5" width="12" height="12" fill="#fff" stroke="#999" stroke-width="1"/></svg>
<svg class="a" style="left:688px;top:484px;" width="16" height="14" viewBox="0 0 16 14"><rect x="1.55" y="0.65" width="11.9" height="6.7" rx="0.6" fill="#fff" stroke="#3b76b6" stroke-width="1.15"/><path d="M1.5 9 H13.7 L15.1 13 H0z" fill="#3b76b6"/><path d="M5.1 11.9 L6 10.3 H9.2 L10.1 11.9z" fill="#fff"/></svg>
<span class="a t11" style="left:707.5px;top:484.5px;line-height:14px;letter-spacing:-0.149px;color:#363636;">Notebooks</span>
<span class="a t11" style="left:856.5px;top:484.5px;line-height:14px;letter-spacing:-0.077px;color:#363636;">Asset-0000012</span>
<span class="a t11" style="left:1074.5px;top:484.5px;line-height:14px;letter-spacing:-0.049px;color:#363636;">In Benutzung</span>
<span class="a t11" style="left:1183.5px;top:484.5px;line-height:14px;letter-spacing:0.049px;color:#363636;">nicht verfügbar</span>
<span class="a t11" style="left:1292.5px;top:484.5px;line-height:14px;letter-spacing:-0.148px;color:#363636;">Consulting</span>
<div class="a" style="left:666px;top:501px;width:685px;height:19px;background:#d4e6fb;"></div>
<div class="a" style="left:706px;top:501px;width:149px;height:19px;background:#fff;"></div>
<svg class="a" style="left:669px;top:504px;" width="13" height="13" viewBox="0 0 13 13"><rect x="0.5" y="0.5" width="12" height="12" fill="#fff" stroke="#333" stroke-width="1"/><path d="M2.6 6.6 L5.2 9.4 L10.6 3.2" fill="none" stroke="#222" stroke-width="1.7"/></svg>
<svg class="a" style="left:688px;top:503px;" width="16" height="14" viewBox="0 0 16 14"><rect x="1.55" y="0.65" width="11.9" height="6.7" rx="0.6" fill="#fff" stroke="#3b76b6" stroke-width="1.15"/><path d="M1.5 9 H13.7 L15.1 13 H0z" fill="#3b76b6"/><path d="M5.1 11.9 L6 10.3 H9.2 L10.1 11.9z" fill="#fff"/></svg>
<span class="a t11" style="left:707.5px;top:503.5px;line-height:14px;letter-spacing:-0.098px;color:#363636;">Notebook 11</span>
<span class="a t11" style="left:856.5px;top:503.5px;line-height:14px;letter-spacing:-0.077px;color:#363636;">Asset-0000013</span>
<span class="a t11" style="left:965.5px;top:503.5px;line-height:14px;letter-spacing:-0.227px;color:#363636;">Max Mustermann</span>
<span class="a t11" style="left:1074.5px;top:503.5px;line-height:14px;letter-spacing:-0.049px;color:#363636;">In Benutzung</span>
<span class="a t11" style="left:1183.5px;top:503.5px;line-height:14px;letter-spacing:-0.168px;color:#363636;">Soest</span>
<span class="a t11" style="left:1292.5px;top:503.5px;line-height:14px;letter-spacing:-0.148px;color:#363636;">Consulting</span>
<span class="a mosaic" style="left:965px;top:467.5px;width:92px;height:10px;line-height:10px;">▌▍▐▌▖▗▍▐▘▍ ▐▗▌▍▐▌▍▖▐▍▗</span>
<span class="a mosaic" style="left:965px;top:487px;width:55px;height:11px;line-height:11px;">▌▖▐▗▌▍ ▐▌▍▐▙▗</span>
<div class="a mos" style="left:965px;top:469px;width:92px;height:8px;"></div>
<div class="a mos" style="left:965px;top:488px;width:55px;height:9px;background-position:-5px 0"></div>
<div class="a" style="left:1351px;top:335px;width:17px;height:192px;background:#f0f0f0;"></div>
<div class="a" style="left:1351px;top:438px;width:17px;height:70px;background:#c9c9c9;"></div>
<svg class="a" style="left:1355.85px;top:340.4px;" width="7.5" height="6" viewBox="0 0 7.5 6"><path d="M0.9 5.0 L3.75 1.7 L6.6 5.0" fill="none" stroke="#555" stroke-width="2.1"/></svg>
<svg class="a" style="left:1356.05px;top:515.4px;" width="7.5" height="6" viewBox="0 0 7.5 6"><path d="M0.9 1.0 L3.75 4.3 L6.6 1.0" fill="none" stroke="#555" stroke-width="2.1"/></svg>
<div class="a" style="left:666px;top:527px;width:702px;height:17px;background:#f0f0f0;"></div>
<div class="a" style="left:683px;top:527px;width:381px;height:17px;background:#c9c9c9;"></div>
<svg class="a" style="left:671px;top:532px;" width="6" height="7" viewBox="0 0 6 7"><path d="M5.4 0.4 L1.2 3.5 L5.4 6.6" fill="none" stroke="#777" stroke-width="1.9"/></svg>
<svg class="a" style="left:1340px;top:532px;" width="6" height="7" viewBox="0 0 6 7"><path d="M0.6 0.4 L4.8 3.5 L0.6 6.6" fill="none" stroke="#777" stroke-width="1.9"/></svg>
<span class="a hd" style="left:665.8px;top:562.86px;font-size:20.6px;line-height:26px;transform:scaleX(0.8518);transform-origin:0 0;color:#555">Asset:</span>
<span class="a hd" style="left:723px;top:562.86px;font-size:20.6px;line-height:26px;transform:scaleX(0.9617);transform-origin:0 0;color:#555">"Notebooks"</span>
<div class="a" style="left:665px;top:616px;width:702px;height:111px;background:#fff;border:1px solid #dcdcdc;box-sizing:border-box;"></div>
<div class="a" style="left:667px;top:598px;width:57px;height:19px;background:#f3f3f3;border:1px solid #dadada;box-sizing:border-box;"></div>
<span class="a t11" style="left:672.5px;top:600.5px;line-height:14px;letter-spacing:-0.368px;color:#111;">Allgemein</span>
<div class="a" style="left:781px;top:598px;width:160px;height:19px;background:#f3f3f3;border:1px solid #dadada;box-sizing:border-box;"></div>
<span class="a t11" style="left:784.5px;top:600.5px;line-height:14px;letter-spacing:0.002px;color:#111;">Benutzerdefinierte Felder (1:1)</span>
<div class="a" style="left:940px;top:598px;width:162px;height:19px;background:#f3f3f3;border:1px solid #dadada;box-sizing:border-box;"></div>
<span class="a t11" style="left:945.25px;top:600.5px;line-height:14px;letter-spacing:0.002px;color:#111;">Benutzerdefinierte Felder (1:n)</span>
<div class="a" style="left:1101px;top:598px;width:67px;height:19px;background:#f3f3f3;border:1px solid #dadada;box-sizing:border-box;"></div>
<span class="a t11" style="left:1106.5px;top:600.5px;line-height:14px;letter-spacing:-0.252px;color:#111;">Dokumente</span>
<div class="a" style="left:1167px;top:598px;width:74px;height:19px;background:#f3f3f3;border:1px solid #dadada;box-sizing:border-box;"></div>
<span class="a t11" style="left:1172.5px;top:600.5px;line-height:14px;letter-spacing:-0.271px;color:#111;">Beziehungen</span>
<div class="a" style="left:1240px;top:598px;width:46px;height:19px;background:#f3f3f3;border:1px solid #dadada;box-sizing:border-box;"></div>
<span class="a t11" style="left:1245.75px;top:600.5px;line-height:14px;letter-spacing:-0.205px;color:#111;">Tickets</span>
<div class="a" style="left:1285px;top:598px;width:52px;height:19px;background:#f3f3f3;border:1px solid #dadada;box-sizing:border-box;"></div>
<span class="a t11" style="left:1290.75px;top:600.5px;line-height:14px;letter-spacing:-0.307px;color:#111;">Ausleihe</span>
<div class="a" style="left:722px;top:596px;width:60px;height:22px;background:#fff;border:1px solid #dadada;box-sizing:border-box;border-bottom:none;"></div>
<span class="a t11" style="left:729.5px;top:598.5px;line-height:14px;letter-spacing:-0.283px;color:#111;">Finanzen</span>
<div class="a" style="left:1336px;top:598px;width:16px;height:16px;background:#f5f5f5;border:1px solid #adadad;box-sizing:border-box;"></div>
<div class="a" style="left:1351px;top:598px;width:17px;height:16px;background:#f5f5f5;border:1px solid #adadad;box-sizing:border-box;"></div>
<svg class="a" style="left:1341px;top:603px;" width="5" height="6" viewBox="0 0 5 6"><path d="M4.5 0 L0.5 3 L4.5 6z" fill="#000"/></svg>
<svg class="a" style="left:1358px;top:603px;" width="5" height="6" viewBox="0 0 5 6"><path d="M0.5 0 L4.5 3 L0.5 6z" fill="#000"/></svg>
<span class="a t11 b" style="left:679px;top:629.5px;line-height:14px;letter-spacing:0.497px;color:#111;">Kaufdaten</span>
<span class="a t11" style="left:679px;top:652.5px;line-height:14px;letter-spacing:-0.102px;color:#111;">Kaufdatum:</span>
<span class="a t11" style="left:679px;top:679.5px;line-height:14px;letter-spacing:-0.115px;color:#111;">Abschreibungszeitraum (Monate):</span>
<span class="a t11" style="left:679px;top:706.5px;line-height:14px;letter-spacing:-0.007px;color:#111;">Beschaffungsart:</span>
<div class="a" style="left:846px;top:650px;width:155px;height:21px;background:#fff;border:1px solid #d4d4d4;box-sizing:border-box;"></div>
<span class="a t11" style="left:848.75px;top:652.5px;line-height:14px;letter-spacing:0.119px;color:#a0a0a0;">01.09.2021</span>
<svg class="a" style="left:987.5px;top:658.5px;" width="9" height="6" viewBox="0 0 9 6"><path d="M0.5 0.6 L4.5 4.4 L8.5 0.6" fill="none" stroke="#b0b0b0" stroke-width="1.1"/></svg>
<div class="a" style="left:846px;top:677px;width:155px;height:21px;background:#f0f0f0;border:1px solid #4a4a4a;box-sizing:border-box;"></div>
<span class="a t11" style="left:849px;top:679.5px;line-height:14px;color:#111;">0</span>
<div class="a" style="left:984px;top:678px;width:15px;height:9px;background:#f3f3f3;border:1px solid #adadad;box-sizing:border-box;border-top:none;"></div>
<div class="a" style="left:984px;top:688px;width:15px;height:8px;background:#f3f3f3;border:1px solid #adadad;box-sizing:border-box;"></div>
<svg class="a" style="left:988.5px;top:680.5px;" width="6" height="4" viewBox="0 0 6 4"><path d="M0 4 L3 0.6 L6 4z" fill="#000"/></svg>
<svg class="a" style="left:988.5px;top:690.5px;" width="6" height="4" viewBox="0 0 6 4"><path d="M0 0 L3 3.4 L6 0z" fill="#000"/></svg>
<div class="a" style="left:846px;top:704px;width:155px;height:20px;background:#c8c8c8;"></div>
<span class="a t11" style="left:848.75px;top:706.5px;line-height:14px;letter-spacing:-0.035px;color:#9a9a9a;">Kauf</span>
<svg class="a" style="left:987.5px;top:712.5px;" width="9" height="6" viewBox="0 0 9 6"><path d="M0.5 0.6 L4.5 4.4 L8.5 0.6" fill="none" stroke="#b4b4b4" stroke-width="1.1"/></svg>
<span class="a t11" style="left:1016px;top:652.5px;line-height:14px;letter-spacing:-0.104px;color:#111;">Preis:</span>
<div class="a" style="left:1134px;top:650px;width:204px;height:21px;background:#f0f0f0;border:1px solid #7a7a7a;box-sizing:border-box;"></div>
<span class="a t11" style="left:1137px;top:652.5px;line-height:14px;letter-spacing:-0.369px;color:#111;">0,00 EUR</span>
<div class="a" style="left:1349px;top:620px;width:16px;height:104px;background:#f0f0f0;"></div>
<div class="a" style="left:1349px;top:637px;width:16px;height:29px;background:#c9c9c9;"></div>
<svg class="a" style="left:1352.75px;top:626px;" width="7.5" height="6" viewBox="0 0 7.5 6"><path d="M0.9 5.0 L3.75 1.7 L6.6 5.0" fill="none" stroke="#555" stroke-width="2.1"/></svg>
<svg class="a" style="left:1352.65px;top:712.8px;" width="7.5" height="6" viewBox="0 0 7.5 6"><path d="M0.9 1.0 L3.75 4.3 L6.6 1.0" fill="none" stroke="#555" stroke-width="2.1"/></svg>
<div class="a" style="left:1209px;top:740px;width:73px;height:23px;background:#e1e1e1;border:1px solid #adadad;box-sizing:border-box;"></div>
<div class="a" style="left:1290px;top:740px;width:73px;height:23px;background:#e1e1e1;border:1px solid #adadad;box-sizing:border-box;"></div>
<span class="a t11" style="left:1237.5px;top:744px;line-height:14px;letter-spacing:-0.453px;color:#000;">OK</span>
<span class="a t11" style="left:1300px;top:744px;line-height:14px;letter-spacing:-0.163px;color:#000;">Abbrechen</span>
</body></html>
